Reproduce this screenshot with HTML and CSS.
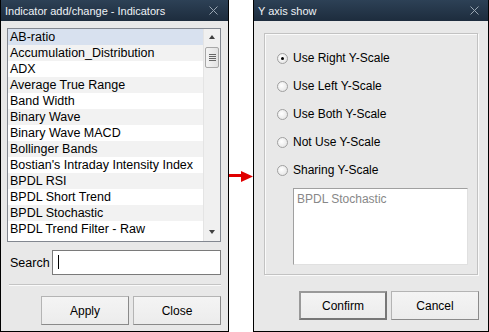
FILE: index.html
```html
<html>
  <head>
    <title>Indicator add/change</title>
    <link rel="stylesheet" href="styles.css">
  </head>
  <body>
    <div class="dlg dlg-ind">
      <div class="title">
        <span>Indicator add/change - Indicators</span>
        <svg class="x" width="9" height="9" viewBox="0 0 9 9"><path d="M0.5 0.5L8.5 8.5M8.5 0.5L0.5 8.5" stroke="#9aa6b2" stroke-width="1"/></svg>
      </div>
      <div class="body">
        <div class="list">
          <div class="items">
            <div class="row sel">AB-ratio</div>
            <div class="row">Accumulation_Distribution</div>
            <div class="row">ADX</div>
            <div class="row">Average True Range</div>
            <div class="row">Band Width</div>
            <div class="row">Binary Wave</div>
            <div class="row">Binary Wave MACD</div>
            <div class="row">Bollinger Bands</div>
            <div class="row">Bostian's Intraday Intensity Index</div>
            <div class="row">BPDL RSI</div>
            <div class="row">BPDL Short Trend</div>
            <div class="row">BPDL Stochastic</div>
            <div class="row">BPDL Trend Filter - Raw</div>
          </div>
          <div class="sbar">
            <div class="arr up"></div>
            <div class="thumb"><i></i><i></i><i></i><i></i></div>
            <div class="track"></div>
            <div class="arr down"></div>
          </div>
        </div>
        <div class="search">
          <label>Search</label>
          <div class="input"><span class="caret"></span></div>
        </div>
        <div class="sep"></div>
        <div class="btns">
          <button class="btn">Apply</button>
          <button class="btn">Close</button>
        </div>
      </div>
    </div>

    <div class="gap">
      <svg class="arrow" width="24" height="11" viewBox="0 0 24 11"><path d="M0 4.5H13" stroke="#e00000" stroke-width="3"/><path d="M12 0L24 5.5L12 11Z" fill="#e00000"/></svg>
    </div>

    <div class="dlg dlg-y">
      <div class="title">
        <span>Y axis show</span>
        <svg class="x" width="9" height="9" viewBox="0 0 9 9"><path d="M0.5 0.5L8.5 8.5M8.5 0.5L0.5 8.5" stroke="#9aa6b2" stroke-width="1"/></svg>
      </div>
      <div class="body">
        <div class="group">
          <div class="radio on"><span class="dot"></span>Use Right Y-Scale</div>
          <div class="radio"><span class="dot"></span>Use Left Y-Scale</div>
          <div class="radio"><span class="dot"></span>Use Both Y-Scale</div>
          <div class="radio"><span class="dot"></span>Not Use Y-Scale</div>
          <div class="radio"><span class="dot"></span>Sharing Y-Scale</div>
          <div class="share">BPDL Stochastic</div>
        </div>
        <div class="btns">
          <button class="btn def">Confirm</button>
          <button class="btn">Cancel</button>
        </div>
      </div>
    </div>
  </body>
</html>
```
FILE: styles.css
```css
* {box-sizing: border-box;}
body {margin: 0; background: #fff; display: flex; height: 332px; font-family: Tahoma, "Liberation Sans", Arial, sans-serif; font-size: 12px; color: #000;}

.dlg {display: flex; flex-direction: column; background: #e8e8e8; border: 1px solid #000; border-top: none; height: 332px;}
.dlg-ind {width: 229px;}
.dlg-y {width: 236px;}
.gap {width: 24px; display: flex; flex-direction: column; padding-top: 171px;}

.title {height: 21px; flex: none; display: flex; align-items: center; justify-content: space-between; padding: 0 9px 0 4px;
  background: linear-gradient(#2d4156, #1d2c3d); color: #eef2f6; font-size: 11px; margin: 0 -1px; border-left: 1px solid #000; border-right: 1px solid #000;}
.dlg-ind .title {padding-right: 10px;}
.title span {padding-top: 1px;}

.body {flex: 1; display: flex; flex-direction: column;}
.dlg-ind .body {padding: 7px 7px 0 6px;}
.dlg-y .body {padding: 12px 10px 0 10px;}

/* indicator list */
.list {display: flex; height: 214px; border: 1px solid #828790; background: #fff;}
.items {flex: 1;}
.row {height: 16px; line-height: 16px; padding-left: 2px; white-space: nowrap; overflow: hidden; font-size: 12.5px;}
.row:nth-child(even) {background: #f2f2f2;}
.row.sel {background: #d8e1ef;}
.sbar {width: 17px; display: flex; flex-direction: column; background: #f0f0f0; border-left: 1px solid #e4e4e4; padding-bottom: 1px;}
.arr {height: 17px; flex: none; position: relative;}
.arr::after {content: ""; position: absolute; left: 5px; border-left: 3.5px solid transparent; border-right: 3.5px solid transparent;}
.arr.up::after {top: 6px; border-bottom: 4px solid #404040;}
.arr.down::after {top: 7px; border-top: 4px solid #404040;}
.thumb {height: 21px; margin: 1px 1px 0 1px; border: 1px solid #a8a8a8; border-radius: 2px; background: linear-gradient(90deg, #f4f4f4, #e2e2e2);
  display: flex; flex-direction: column; align-items: center; justify-content: center; gap: 1px;}
.thumb i {display: block; width: 7px; height: 1px; background: #666;}
.track {flex: 1;}

/* search */
.search {display: flex; align-items: center; margin-top: 8px; height: 25px;}
.search label {width: 45px; padding-left: 3px; font-size: 12.5px;}
.input {flex: 1; height: 25px; border: 1px solid #7a7a7a; background: #fff; padding: 4px 0 0 5px;}
.caret {display: block; width: 1px; height: 14px; background: #000;}
.sep {margin: 9px 0 0 2px; height: 2px; border-top: 1px solid #c4c4c4; border-bottom: 1px solid #fafafa;}

.btns {display: flex; justify-content: flex-end; gap: 4px;}
.dlg-ind .btns {margin-top: 10px;}
.dlg-y .btns {margin-top: 16px; margin-right: -1px;}
.btn {width: 88px; height: 29px; font-family: inherit; font-size: 12px; color: #000; background: linear-gradient(#f4f4f4, #ececec);
  border: 1px solid #b4b4b4; border-right-color: #8a8a8a; border-bottom-color: #8a8a8a; padding: 0;}
.btn.def {border: 2px solid #777; border-top-color: #999; border-left-color: #999;}

/* y axis group */
.group {height: 242px; border: 1px solid #c2c2c2; box-shadow: inset 1px 1px 0 #fafafa, 1px 1px 0 #fafafa; padding: 16px 0 0 12px;}
.radio {display: flex; align-items: center; height: 16px; margin-bottom: 12px;}
.dot {width: 11px; height: 11px; border-radius: 50%; border: 1px solid #a0a0a0; background: radial-gradient(circle at 40% 40%, #fff, #e0e0e0);
  margin-right: 5px; position: relative;}
.radio.on .dot::after {content: ""; position: absolute; left: 3px; top: 3px; width: 3px; height: 3px; border-radius: 50%; background: #000;}
.share {margin: -2px 0 0 16px; width: 175px; height: 77px; background: #fff; border: 1px solid #a0a0a0; border-right-color: #e0e0e0; border-bottom-color: #e0e0e0;
  color: #888; padding: 3px 0 0 3px;}
```
